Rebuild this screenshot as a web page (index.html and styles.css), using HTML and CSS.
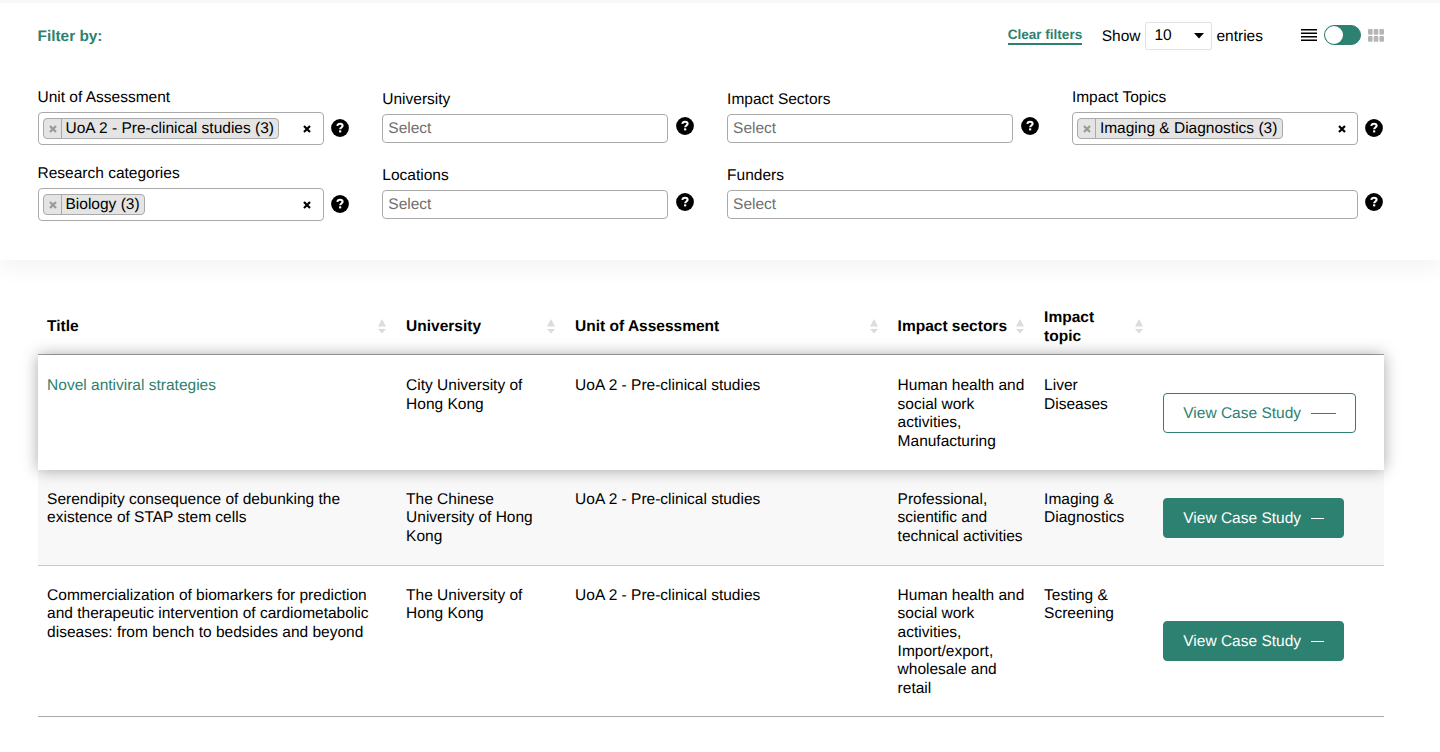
FILE: index.html
```html
<!DOCTYPE html>
<html lang="en">
<head>
<meta charset="utf-8">
<title>Case studies</title>
<link rel="stylesheet" href="styles.css">
</head>
<body>
<svg class="defs" width="0" height="0" aria-hidden="true">
  <symbol id="help" viewBox="0 0 18 18"><circle cx="9" cy="9" r="8.9" fill="#000"/><path d="M6.3 6.9C6.6 5.4 7.6 4.8 9 4.8c1.6 0 2.6.8 2.6 2 0 1.7-2.4 1.7-2.4 3.5" fill="none" stroke="#fff" stroke-width="2.1"/><rect x="8" y="11.3" width="2.3" height="2.3" rx=".8" fill="#fff"/></symbol>
  <symbol id="cross" viewBox="0 0 8 8"><path d="M1 1l6 6M7 1L1 7" fill="none" stroke="currentColor" stroke-width="2.2"/></symbol>
  <symbol id="sort" viewBox="0 0 8 15"><path d="M4 0l4 7.5H0zM0 10h8l-4 4.5z" fill="#dcdcdc"/></symbol>
</svg>
<section class="filters">
  <header class="toolbar">
    <h2 class="toolbar-title">Filter by:</h2>
    <a class="clear">Clear filters</a>
    <span class="show">Show</span>
    <span class="length"><span>10</span><svg class="caret" viewBox="0 0 10 6"><path d="M0 0h10L5 5.6z"/></svg></span>
    <span class="entries">entries</span>
    <svg class="list-icon" viewBox="0 0 16 12"><path d="M0 .8h16M0 4.3h16M0 7.8h16M0 11.3h16" stroke="#000" stroke-width="1.4"/></svg>
    <span class="toggle"><i class="knob"></i></span>
    <svg class="grid-icon" viewBox="0 0 16 13" fill="#b5b5b5"><rect width="4.6" height="5.8" rx="1"/><rect x="5.7" width="4.6" height="5.8" rx="1"/><rect x="11.4" width="4.6" height="5.8" rx="1"/><rect y="7" width="4.6" height="5.8" rx="1"/><rect x="5.7" y="7" width="4.6" height="5.8" rx="1"/><rect x="11.4" y="7" width="4.6" height="5.8" rx="1"/></svg>
  </header>
  <div class="fields">
    <div class="field filled"><label>Unit of Assessment</label><div class="line"><div class="box"><span class="tag"><i class="remove"><svg><use href="#cross"/></svg></i><b>UoA 2 - Pre-clinical studies (3)</b></span><svg class="clear-x"><use href="#cross"/></svg></div><svg class="help"><use href="#help"/></svg></div></div>
    <div class="field"><label>University</label><div class="line"><div class="box">Select</div><svg class="help"><use href="#help"/></svg></div></div>
    <div class="field"><label>Impact Sectors</label><div class="line"><div class="box">Select</div><svg class="help"><use href="#help"/></svg></div></div>
    <div class="field filled"><label>Impact Topics</label><div class="line"><div class="box"><span class="tag"><i class="remove"><svg><use href="#cross"/></svg></i><b>Imaging &amp; Diagnostics (3)</b></span><svg class="clear-x"><use href="#cross"/></svg></div><svg class="help"><use href="#help"/></svg></div></div>
    <div class="field filled"><label>Research categories</label><div class="line"><div class="box"><span class="tag"><i class="remove"><svg><use href="#cross"/></svg></i><b>Biology (3)</b></span><svg class="clear-x"><use href="#cross"/></svg></div><svg class="help"><use href="#help"/></svg></div></div>
    <div class="field"><label>Locations</label><div class="line"><div class="box">Select</div><svg class="help"><use href="#help"/></svg></div></div>
    <div class="field wide"><label>Funders</label><div class="line"><div class="box">Select</div><svg class="help"><use href="#help"/></svg></div></div>
  </div>
</section>
<main class="results">
  <div class="row head">
    <div class="cell"><span>Title</span><svg class="sort"><use href="#sort"/></svg></div>
    <div class="cell"><span>University</span><svg class="sort"><use href="#sort"/></svg></div>
    <div class="cell"><span>Unit of Assessment</span><svg class="sort"><use href="#sort"/></svg></div>
    <div class="cell"><span>Impact sectors</span><svg class="sort"><use href="#sort"/></svg></div>
    <div class="cell"><span>Impact<br>topic</span><svg class="sort"><use href="#sort"/></svg></div>
    <div class="cell"></div>
  </div>
  <div class="row active">
    <div class="cell">Novel antiviral strategies</div>
    <div class="cell">City University of<br>Hong Kong</div>
    <div class="cell">UoA 2 - Pre-clinical studies</div>
    <div class="cell">Human health and<br>social work<br>activities,<br>Manufacturing</div>
    <div class="cell">Liver<br>Diseases</div>
    <div class="cell action"><a class="button"><span>View Case Study</span><i class="dash"></i></a></div>
  </div>
  <div class="row shaded">
    <div class="cell">Serendipity consequence of debunking the<br>existence of STAP stem cells</div>
    <div class="cell">The Chinese<br>University of Hong<br>Kong</div>
    <div class="cell">UoA 2 - Pre-clinical studies</div>
    <div class="cell">Professional,<br>scientific and<br>technical activities</div>
    <div class="cell">Imaging &amp;<br>Diagnostics</div>
    <div class="cell action"><a class="button"><span>View Case Study</span><i class="dash"></i></a></div>
  </div>
  <div class="row last">
    <div class="cell">Commercialization of biomarkers for prediction<br>and therapeutic intervention of cardiometabolic<br>diseases: from bench to bedsides and beyond</div>
    <div class="cell">The University of<br>Hong Kong</div>
    <div class="cell">UoA 2 - Pre-clinical studies</div>
    <div class="cell">Human health and<br>social work<br>activities,<br>Import/export,<br>wholesale and<br>retail</div>
    <div class="cell">Testing &amp;<br>Screening</div>
    <div class="cell action"><a class="button"><span>View Case Study</span><i class="dash"></i></a></div>
  </div>
</main>
</body>
</html>
```
FILE: styles.css
```css
* { box-sizing: border-box; }
body {
  margin: 0;
  height: 752px;
  overflow: hidden;
  background: #fff;
  color: #000;
  font: 15.5px/18.65px "Liberation Sans", Arial, sans-serif;
  text-rendering: geometricPrecision;
}
svg { display: block; flex: none; }
.defs { position: absolute; }
i, b { font: inherit; }

.filters {
  height: 259.5px;
  border-top: 3px solid #f8f8f8;
  background: #fff;
  box-shadow: 0 10px 20px rgba(0, 0, 0, .045);
}
.toolbar {
  display: flex;
  align-items: center;
  height: 64px;
  padding: 0 56.5px 0 37.5px;
}
.toolbar-title { margin: 0 auto 0 0; padding-top: 4px; font-size: 15.4px; color: #2d8170; }
.clear {
  border-bottom: 2px solid #2d8170;
  color: #2d8170;
  font-size: 13.55px;
  font-weight: bold;
  line-height: 17px;
  padding-top: 1px;
}
.show { margin-left: 19.5px; padding-top: 4px; }
.entries { padding-top: 4px; }
.length {
  display: flex;
  align-items: center;
  justify-content: space-between;
  width: 67px;
  height: 28px;
  margin: 1px 4.5px 0 4.5px;
  padding: 0 7px 0 8.5px;
  border: 1px solid #e2e2e2;
  border-radius: 2px;
}
.length span { padding-top: 2px; }
.caret { width: 10px; height: 6px; }
.list-icon { width: 16px; height: 12px; margin-left: 37.5px; }
.toggle {
  width: 37px;
  height: 20px;
  margin: 0 7px;
  border: 1px solid #2d8170;
  border-radius: 10px;
  background: #2d8170;
}
.knob { display: block; width: 18px; height: 18px; border-radius: 50%; background: #fff; }
.grid-icon { width: 16px; height: 13px; }

.fields {
  display: grid;
  grid-template-columns: repeat(4, 344.8px);
  grid-auto-rows: 76px;
  padding: 22.3px 0 0 37.5px;
}
.field { padding-top: 1.5px; }
.field.filled { padding-top: 0; }
.wide { grid-column: span 2; }
.field label { display: block; margin-bottom: 4.3px; }
.line { display: flex; gap: 7.3px; align-items: flex-start; }
.box {
  display: flex;
  align-items: center;
  width: 286.2px;
  height: 29.5px;
  padding: 2px 5px 0;
  border: 1px solid #aaa;
  border-radius: 4px;
  color: #6f6f6f;
}
.wide .box { width: 630.5px; }
.filled .box { height: 32.5px; justify-content: space-between; padding: 0 11.5px 0 4.5px; color: #000; }
.help { width: 18px; height: 18px; margin-top: 3px; }
.filled .help { margin-top: 6.5px; }
.tag {
  display: flex;
  align-items: center;
  height: 21px;
  border: 1px solid #aaa;
  border-radius: 4px;
  background: #e4e4e4;
}
.tag b { padding: 2px 4.5px 0 3.5px; }
.remove {
  display: flex;
  align-items: center;
  justify-content: center;
  width: 18px;
  height: 19px;
  border-right: 1px solid #aaa;
  color: #999;
}
.remove svg, .clear-x { width: 8px; height: 8px; }

.results { width: 1346.5px; margin: 38.5px 0 0 37.5px; }
.row {
  display: grid;
  grid-template-columns: 359px 169px 322.5px 146.5px 119px 1fr;
  border-bottom: 1px solid #c8c8c8;
}
.cell { padding: 21.2px 0 0 9.6px; white-space: nowrap; }
.head { height: 57px; border-bottom: 1px solid #aaa; font-weight: bold; }
.head .cell {
  display: flex;
  align-items: center;
  justify-content: space-between;
  padding: 0 10.5px 0 9.6px;
}
.head span { padding-top: 3px; }
.sort { width: 8px; height: 15px; }
.active {
  position: relative;
  height: 114.5px;
  border: 0;
  background: #fff;
  box-shadow: 0 0 15px rgba(0, 0, 0, .35);
}
.active .cell { padding-top: 22px; }
.active .cell:first-child { color: #2d8170; }
.shaded { height: 96px; background: #f8f8f8; }
.last { height: 151px; border-bottom-color: #aaa; }
.action { display: flex; align-items: center; padding-top: 0; }
.active .cell.action { padding-top: 1px; }
.shaded .action { padding-top: 1px; }
.button {
  display: flex;
  align-items: center;
  gap: 9.5px;
  height: 40px;
  padding: 0 19.2px;
  border: 1px solid #2d8170;
  border-radius: 4px;
  background: #2d8170;
  color: #fff;
}
.button span { padding-top: 3px; }
.dash { width: 13.5px; height: 1px; margin-top: 2px; background: currentColor; }
.active .button { background: #fff; color: #2d8170; }
.active .dash { width: 25px; }
```
